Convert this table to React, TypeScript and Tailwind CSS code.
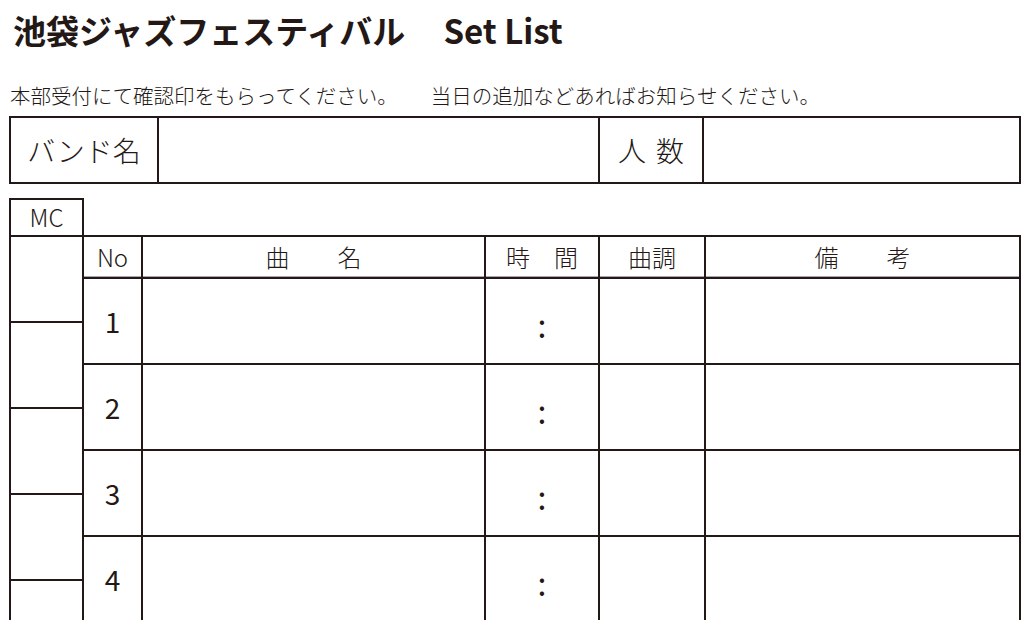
const songs = [1, 2, 3, 4];
const mcCells = [1, 2, 3, 4, 5];

export default function App() {
  return (
    <div className="w-[1024px] h-[620px] overflow-hidden bg-white text-[#231815] font-['Noto_Sans_CJK_JP','Noto_Sans',sans-serif]">
      {/* Title */}
      <h1 className="pt-[14px] pl-[13px] flex items-baseline font-bold leading-none">
        <span className="text-[33px]">池袋ジャズフェスティバル</span>
        <span className="ml-[38px] text-[33px]">Set List</span>
      </h1>

      <p className="mt-[38px] pl-[10px] text-[20.5px] leading-none font-light whitespace-nowrap">
        本部受付にて確認印をもらってください。
        <span className="ml-[33px]">当日の追加などあればお知らせください。</span>
      </p>

      {/* Band name / headcount */}
      <div className="ml-[9px] mr-[3px] mt-[10px] h-[68px] border-2 border-[#231815] grid grid-cols-[148px_441px_104px_1fr]">
        <div className="border-r-2 border-[#231815] flex items-center justify-center text-[28px] font-light">バンド名</div>
        <div className="border-r-2 border-[#231815]" />
        <div className="border-r-2 border-[#231815] flex items-center justify-center gap-[10px] text-[28px] font-light">
          <span>人</span>
          <span>数</span>
        </div>
        <div />
      </div>

      {/* MC column + set list table */}
      <div className="mt-[14px] pl-[9px] pr-[3px] flex">
        <div className="w-[75px] shrink-0">
          <div className="h-[39px] border-2 border-[#231815] flex items-center justify-center text-[24px] font-light">MC</div>
          {mcCells.map((c) => (
            <div key={c} className="h-[86px] border-x-2 border-b-2 border-[#231815]" />
          ))}
        </div>

        <div className="flex-1 -ml-[2px] mt-[37px]">
          <div className="h-[44px] border-2 border-[#231815] shadow-[inset_0_-1px_0_#a9a9a9] grid grid-cols-[59px_343px_114px_106px_1fr] text-[24px] font-light">
            <div className="border-r-2 border-[#231815] flex items-center justify-center">No</div>
            <div className="border-r-2 border-[#231815] flex items-center justify-center whitespace-pre">曲　　名</div>
            <div className="border-r-2 border-[#231815] flex items-center justify-center whitespace-pre">時　間</div>
            <div className="border-r-2 border-[#231815] flex items-center justify-center">曲調</div>
            <div className="flex items-center justify-center whitespace-pre">備　　考</div>
          </div>
          {songs.map((n) => (
            <div key={n} className="h-[86px] border-x-2 border-b-2 border-[#231815] grid grid-cols-[59px_343px_114px_106px_1fr]">
              <div className="border-r-2 border-[#231815] flex items-center justify-center text-[28px]">{n}</div>
              <div className="border-r-2 border-[#231815]" />
              <div className="border-r-2 border-[#231815] flex items-center justify-center pt-[6px] text-[32px] leading-none">:</div>
              <div className="border-r-2 border-[#231815]" />
              <div />
            </div>
          ))}
        </div>
      </div>
    </div>
  );
}
